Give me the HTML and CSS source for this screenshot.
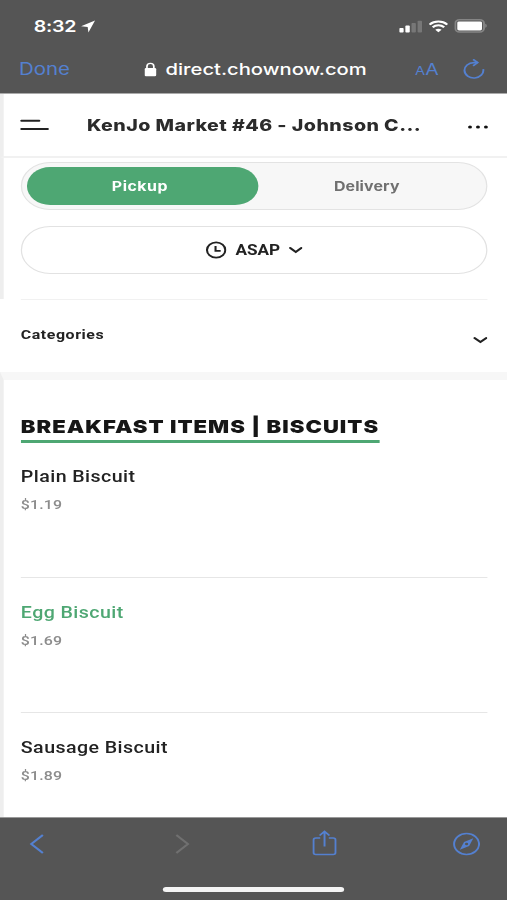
FILE: index.html
```html
<!DOCTYPE html>
<html lang="en">
<head>
<meta charset="utf-8">
<title>KenJo Market #46</title>
<link rel="stylesheet" href="styles.css">
</head>
<body>
<div class="screen">
  <header class="browser-top">
    <div class="status">
      <span class="clock">8:32</span>
      <svg class="locate" width="12" height="13" viewBox="0 0 12 13"><path d="M11.600.6.2 6.300l5.400.7.6 5.500z" fill="#fff"/></svg>
      <div class="status-right">
        <svg width="19" height="13" viewBox="0 0 19 13"><rect x="0" y="8" width="3.600" height="4.500" rx=".8" fill="#fff"/><rect x="5" y="5.600" width="3.600" height="6.900" rx=".8" fill="#fff"/><rect x="10" y="3" width="3.600" height="9.500" rx=".8" fill="#777"/><rect x="15" y="0.800" width="3.600" height="11.700" rx=".8" fill="#777"/></svg>
        <svg width="16" height="13" viewBox="0 0 16 13" fill="none" stroke="#fff" stroke-width="2"><path d="M.8 4.600c4-4 10.400-4 14.400 0M3.300 7.300c2.700-2.600 6.700-2.600 9.400 0"/><path d="M8 12.300 5.400 9.700c1.500-1.300 3.700-1.300 5.200 0z" fill="#fff" stroke="none"/></svg>
        <svg width="27" height="14" viewBox="0 0 27 14"><rect x=".8" y=".8" width="23.400" height="12.200" rx="3.400" fill="none" stroke="#858585" stroke-width="1.600"/><rect x="2.400" y="2.400" width="20.200" height="9" rx="1.400" fill="#fff"/><path d="M25.200 4.800c1.700.6 1.700 3.400 0 4z" fill="#858585"/></svg>
      </div>
    </div>
    <div class="address">
      <span class="done">Done</span>
      <svg class="lock" width="10" height="15" viewBox="0 0 10 15"><rect x="0" y="6" width="9.600" height="8.300" rx="1.300" fill="#fff"/><path d="M2 6.500V4.200c0-3.800 5.600-3.800 5.600 0v2.300" fill="none" stroke="#fff" stroke-width="1.400"/></svg>
      <span class="url">direct.chownow.com</span>
      <span class="text-size"><small>A</small>A</span>
      <svg class="reload" width="18" height="20" viewBox="0 0 18 20" fill="none" stroke="#5480d0" stroke-width="1.600"><path d="M16.600 10.200A7.700 7.700 0 1 1 9 3.600h3"/><path d="M8.300.3 12 3.600 8.300 6.900"/></svg>
    </div>
  </header>

  <main class="page">
    <div class="store">
      <svg class="menu" width="24" height="14" viewBox="0 0 24 14" stroke="#222" stroke-width="1.900" stroke-linecap="round"><path d="M1.500 2.700h14.500M1.500 11h21.500"/></svg>
      <h1>KenJo Market #46 - Johnson C...</h1>
      <svg class="more" width="17" height="4" viewBox="0 0 17 4" fill="#111"><circle cx="1.800" cy="2" r="1.600"/><circle cx="8.300" cy="2" r="1.600"/><circle cx="14.800" cy="2" r="1.600"/></svg>
    </div>
    <div class="order">
      <div class="toggle">
        <div class="option active"><span>Pickup</span></div>
        <div class="option"><span>Delivery</span></div>
      </div>
      <div class="time">
        <svg width="17" height="18" viewBox="0 0 17 18" fill="none" stroke="#222" stroke-width="1.700"><ellipse cx="8.500" cy="9" rx="7.500" ry="7.700"/><path d="M8 5v4.800h4.200"/></svg>
        <span>ASAP</span>
        <svg width="11" height="8" viewBox="0 0 11 8"><path d="m1 2 4.500 4L10 2" fill="none" stroke="#222" stroke-width="1.900" stroke-linecap="round"/></svg>
      </div>
    </div>
    <div class="categories">
      <span>Categories</span>
      <svg class="chev" width="12" height="8" viewBox="0 0 12 8"><path d="m1.500 2 4.800 4 4.800-4" fill="none" stroke="#222" stroke-width="1.900" stroke-linecap="round"/></svg>
    </div>
    <div class="items">
      <h2><span>BREAKFAST ITEMS | BISCUITS</span></h2>
      <div class="item"><span class="name">Plain Biscuit</span><span class="price">$1.19</span></div>
      <div class="item"><span class="name green">Egg Biscuit</span><span class="price">$1.69</span></div>
      <div class="item"><span class="name">Sausage Biscuit</span><span class="price">$1.89</span></div>
    </div>
  </main>

  <footer class="browser-bottom">
    <div class="tools">
      <svg width="12" height="20" viewBox="0 0 12 20" fill="none" stroke="#5480d0" stroke-width="1.800"><path d="M11 1 1.500 10l9.500 9"/></svg>
      <svg class="forward" width="12" height="20" viewBox="0 0 12 20" fill="none" stroke="#707070" stroke-width="1.800"><path d="m1 1 9.500 9L1 19"/></svg>
      <svg class="share" width="20" height="26" viewBox="0 0 20 26" fill="none" stroke="#5480d0" stroke-width="1.600"><path d="M6.500 8H3Q1 8 1 10v12.500q0 2 2 2h14q2 0 2-2V10q0-2-2-2h-3.500M10 16.500V2M6 5.500l4-4 4 4"/></svg>
      <svg class="compass" width="22" height="24" viewBox="0 0 22 24"><ellipse cx="11" cy="12" rx="10.200" ry="10.500" fill="none" stroke="#5480d0" stroke-width="1.600"/><path d="m16.500 6.300-3.400 7.800L5.500 17.700l3.400-7.800z" fill="#5480d0"/><circle cx="11" cy="12" r="1.300" fill="#555"/></svg>
    </div>
    <div class="home"></div>
  </footer>
</div>
</body>
</html>
```

FILE: styles.css
```css
* { box-sizing: border-box; }
body { margin: 0; overflow: hidden; background: #fff; font-family: Roboto, sans-serif; color: #222; }
svg { display: block; flex: none; }
span, h1, h2 { white-space: nowrap; }

.screen { width: 414px; height: 900px; display: flex; flex-direction: column; transform: scaleX(1.22464); transform-origin: 0 0; }

.browser-top { height: 94px; background: #555; border-bottom: 1px solid #aaa; font-family: Inter, sans-serif; flex: none; }
.status { height: 52px; display: flex; align-items: center; padding: 0 16px 0 27.500px; color: #fff; }
.clock { font-size: 16px; font-weight: 600; letter-spacing: -.2px; }
.locate { margin-left: 4px; }
.status-right { margin-left: auto; display: flex; align-items: center; gap: 5px; }
.address { height: 34px; display: flex; align-items: center; padding: 0 18px 0 15.500px; color: #5480d0; }
.done { font-size: 16.700px; }
.lock { margin-left: 61px; }
.url { margin-left: 7px; font-size: 16.500px; font-weight: 500; color: #fff; }
.text-size { margin-left: 39.500px; font-size: 16px; }
.text-size small { font-size: 12px; }
.reload { margin-left: auto; }

.page { height: 723px; flex: none; overflow: hidden; }
.store { height: 64px; display: flex; align-items: center; padding: 0 15px 0 13px; border-bottom: 2px solid #f1f1f1; border-left: 3px solid #eee; }
h1 { margin: 0 0 0 31px; font: 800 16px Inter, sans-serif; letter-spacing: .37px; color: #2b2b2b; }
.more { margin: 4px 0 0 auto; }
.order { height: 141px; padding: 4px 16px 0 14px; border-left: 3px solid #eee; }
.toggle { height: 48px; display: flex; padding: 4px 9px 4px 3.500px; border: 1px solid #e3e3e3; border-radius: 24px; background: #f7f7f7; }
.option { flex: 1; display: flex; align-items: center; justify-content: center; border-radius: 20px; font: 700 13px Inter, sans-serif; letter-spacing: .1px; color: #707070; }
.active { flex: 0 0 189.500px; padding-right: 4px; background: #4ea773; color: #fff; letter-spacing: .4px; }
.time { height: 48px; margin-top: 16px; display: flex; align-items: center; justify-content: center; border: 1px solid #e2e2e2; border-radius: 24px; font-size: 14px; font-weight: 700; }
.time span { margin: 0 7px; }
.categories { height: 73px; margin: 0 16px 0 17px; display: flex; justify-content: space-between; align-items: center; font-size: 13px; font-weight: 700; letter-spacing: .45px; border-top: 1px solid #f1f1f1; }
.categories span { padding-bottom: 3px; }
.categories .chev { margin-top: 8px; }
.items { height: 445px; padding: 34px 16px 0 14px; border-left: 3px solid #eee; border-top: 8px solid #f7f7f7; }
h2 { margin: 0; height: 50px; font: 900 18px/25px Inter, sans-serif; color: #161616; letter-spacing: .82px; }
h2 span { display: inline-block; height: 29px; border-bottom: 3px solid #4ea773; }
.item { height: 113.500px; margin-bottom: 22px; display: flex; flex-direction: column; border-bottom: 1.500px solid #e6e6e6; }
.name { font-size: 16px; font-weight: 500; line-height: 26px; letter-spacing: .36px; }
.green { color: #4ea773; }
.price { font-size: 13px; font-weight: 500; line-height: 29px; letter-spacing: .1px; color: #8c8c8c; }

.browser-bottom { flex: 1; background: #555; border-top: 1px solid #999; }
.tools { height: 52px; display: flex; align-items: center; padding: 0 22px 0 24px; }
.forward { margin-left: 107px; }
.share { margin: -3px 0 0 99.500px; }
.compass { margin-left: auto; }
.home { width: 148px; height: 5px; margin: 17px auto 0; border-radius: 3px; background: #f4f4f4; }
```
